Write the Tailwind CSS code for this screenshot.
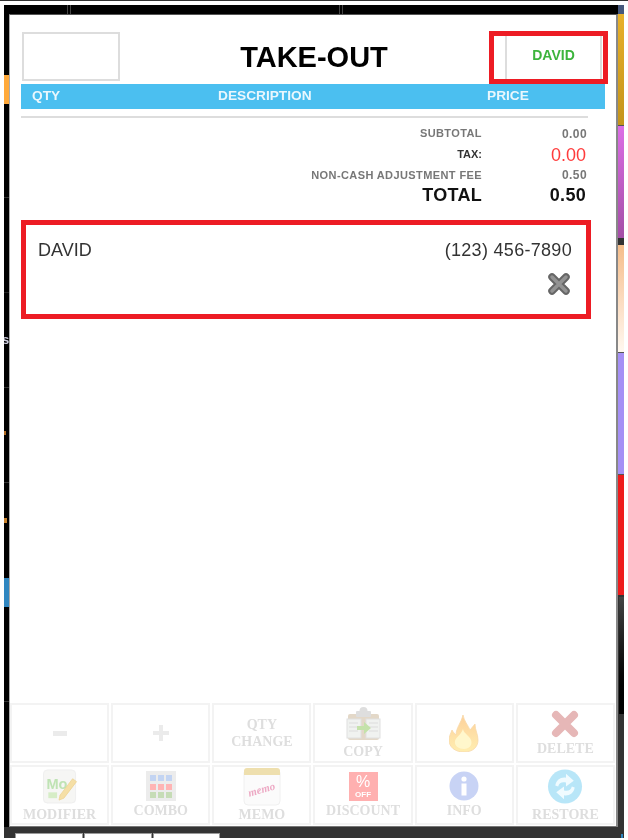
<!DOCTYPE html>
<html lang="en">
<head>
  <meta charset="UTF-8">
  <meta name="viewport" content="width=device-width, initial-scale=1.0">
  <title>Take-Out Order</title>
  <script src="https://cdn.jsdelivr.net/npm/@tailwindcss/browser@4"></script>
</head>
<body class="bg-white font-['Liberation_Sans',Arial,sans-serif]">
  <div class="w-[628px] h-[840px] overflow-hidden bg-white blur-[0.5px]">
    <div class="h-[5px] border-t border-[#333]"></div>
    <div class="ml-[4px] w-[620px] h-[833px] flex flex-col bg-[#333]">

      <!-- top edge of the screen behind -->
      <div class="h-[9px] flex bg-black">
        <div class="w-[64px] border-r border-[#444]"></div>
        <div class="w-[3px] border-r border-[#444]"></div>
        <div class="w-[269px] border-r border-[#444]"></div>
        <div class="w-[3px] border-r border-[#444]"></div>
        <div class="flex-1"></div>
        <div class="w-[6px] bg-[#46587c]"></div>
      </div>

      <div class="h-[813px] flex">
        <!-- left strip -->
        <div class="w-[5px] flex flex-col bg-black text-[13px] font-bold leading-none overflow-hidden">
          <div class="h-[61px]"></div>
          <div class="h-[29px] bg-[#ffa93a]"></div>
          <div class="h-[94px] border-b border-[#333]"></div>
          <div class="h-[95px] border-b border-[#222]"></div>
          <div class="h-[95px] border-b border-[#333] relative text-[#ccd]"><span class="block pt-[40px] -ml-[2px]">s</span></div>
          <div class="h-[95px] border-b border-[#333] pt-[43px]"><div class="w-[2px] h-[4px] bg-[#b06a20]"></div></div>
          <div class="h-[95px] pt-[35px]"><div class="w-[3px] h-[5px] bg-[#c9822c]"></div></div>
          <div class="h-[29px] bg-[#2f86c0]"></div>
          <div class="h-[95px] border-b border-[#333]"></div>
        </div>

        <!-- take-out panel -->
        <div class="w-[609px] flex flex-col bg-white border-t border-t-[#555] border-l border-l-[#aaa] border-r-2 border-r-[#888] border-b border-b-[#777]">
          <div class="pt-[16px] pl-[12px] flex items-start h-[69px]">
            <div class="mt-[1px] w-[98px] h-[49px] border-2 border-[#ddd] shrink-0"></div>
            <div class="flex-1 pl-[19px] pt-[8px] text-center text-[29px] leading-[36px] font-bold text-black">TAKE-OUT</div>
            <div class="w-[119px] h-[53px] border-[5px] border-[#ed1c24] shrink-0 mr-[8px] pl-[11px] pr-[1px]">
              <div class="h-full border-x-2 border-[#ddd] flex items-center justify-center text-[14px] font-bold text-[#3cb43c] pb-[4px]">DAVID</div>
            </div>
          </div>

          <div class="ml-[11px] w-[584px] h-[25px] bg-[#4bbff0] pl-[11px] grid grid-cols-[186px_269px_1fr] items-center text-[13.7px] font-bold text-[#eaf7fd]">
            <span>QTY</span>
            <span>DESCRIPTION</span>
            <span>PRICE</span>
          </div>
          <div class="ml-[11px] w-[567px] h-[2px] mt-[7px] bg-[#ddd]"></div>

          <div class="mt-[5px] ml-[11px] w-[566px] font-bold text-right leading-none">
            <div class="h-[21px] grid grid-cols-[1fr_105px] items-center text-[11px] tracking-[0.4px] text-[#777]">
              <span>SUBTOTAL</span><span class="text-[12px]">0.00</span>
            </div>
            <div class="h-[21px] grid grid-cols-[1fr_105px] items-center text-[11px] text-[#333]">
              <span>TAX:</span><span class="text-[18px] font-normal text-[#ff3b3b] pr-px">0.00</span>
            </div>
            <div class="h-[20px] grid grid-cols-[1fr_105px] items-center text-[11px] tracking-[0.4px] text-[#777]">
              <span>NON-CASH ADJUSTMENT FEE</span><span class="text-[12px]">0.50</span>
            </div>
            <div class="h-[19px] grid grid-cols-[1fr_105px] items-center text-[18px] tracking-[0.3px] text-[#111]">
              <span>TOTAL</span><span class="pr-px">0.50</span>
            </div>
          </div>

          <div class="mt-[16px] ml-[11px] w-[570px] h-[99px] border-[5px] border-[#ed1c24] pl-[12px] pr-[14px] pt-[15px]">
            <div class="flex justify-between text-[18px] leading-[21px] text-[#333]">
              <span>DAVID</span>
              <span class="tracking-[0.3px]">(123) 456-7890</span>
            </div>
            <div class="flex justify-end mt-[11px] pr-[1px]">
              <svg width="24" height="24" viewBox="0 0 24 24">
                <path d="M5 5L19 19M19 5L5 19" stroke="#666" stroke-width="7.5" stroke-linecap="round"/>
                <path d="M5 5L19 19M19 5L5 19" stroke="#939393" stroke-width="3.5" stroke-linecap="round"/>
              </svg>
            </div>
          </div>

          <!-- action buttons, disabled -->
          <div class="mt-auto mr-[1px] grid grid-cols-6 gap-[2px] grid-rows-[60px_60px] pb-[1px] font-['Liberation_Serif',serif] font-bold text-[#dedede] text-[14px] leading-[17px] text-center">
            <div class="border-2 border-[#f3f3f3] flex items-center justify-center">
              <svg width="14" height="5"><rect width="14" height="5" fill="#ebebeb"/></svg>
            </div>
            <div class="border-2 border-[#f3f3f3] flex items-center justify-center">
              <svg width="16" height="16"><path d="M6 0h4v6h6v4h-6v6H6v-6H0V6h6z" fill="#ebebeb"/></svg>
            </div>
            <div class="border-2 border-[#f3f3f3] flex items-center justify-center">QTY<br>CHANGE</div>
            <div class="border-2 border-[#f3f3f3] flex flex-col items-center justify-center">
              <svg width="35" height="35" viewBox="0 0 35 35">
                <rect x="2" y="8" width="31" height="26" rx="2" fill="#e3d8c8"/>
                <circle cx="17.5" cy="5" r="4" fill="#dedede"/>
                <rect x="10" y="5" width="15" height="6" rx="1" fill="#dedede"/>
                <rect x="1" y="13" width="14" height="19" fill="#f0f2f0" stroke="#e0e0e0"/>
                <rect x="20" y="13" width="14" height="19" fill="#f0f2f0" stroke="#e0e0e0"/>
                <path d="M3 17h9M3 21h9M3 25h9M23 17h9M23 21h9M23 25h9" stroke="#dcdcdc"/>
                <path d="M11 20h7v-4l7 6-7 6v-4h-7z" fill="#c4e2aa"/>
              </svg>
              <span class="mt-[2px]">COPY</span>
            </div>
            <div class="border-2 border-[#f3f3f3] flex items-center justify-center">
              <svg width="30" height="37" viewBox="0 0 30 37">
                <defs><linearGradient id="flame" x1="0" y1="0" x2="0" y2="1"><stop offset="0" stop-color="#fdd09a"/><stop offset="1" stop-color="#ffeeb0"/></linearGradient></defs>
                <path d="M14 0C15 6 19 10 21 15L26 9C26 15 29 19 29 25C29 32 24 37 15 37C6 37 0 32 0 25C0 21 2 18 3 15C4 17 6 19 7 20C7 13 12 8 14 0Z" fill="url(#flame)" stroke="#f8d8a8" stroke-width="0.8"/>
                <path d="M14 14C15 19 20 20 22 25C24 30 20 34 15 34C10 34 5 31 6 26C7 22 12 20 14 14Z" fill="#fff7cc"/>
              </svg>
            </div>
            <div class="border-2 border-[#f3f3f3] flex flex-col items-center justify-center">
              <svg width="30" height="30" viewBox="0 0 30 30">
                <path d="M6 6L24 24M24 6L6 24" stroke="#e6b7b7" stroke-width="8" stroke-linecap="round"/>
              </svg>
              <span class="mt-[1px]">DELETE</span>
            </div>

            <div class="border-2 border-[#f3f3f3] flex flex-col items-center justify-center pt-[2px]">
              <svg width="36" height="36" viewBox="0 0 36 36">
                <rect x="1" y="1" width="33" height="34" rx="4" fill="#f6f6f4" stroke="#eeeeee"/>
                <text x="4" y="21" font-family="Liberation Sans, sans-serif" font-size="15" font-weight="700" fill="#bfe3b4">Mo</text>
                <rect x="6" y="24" width="9" height="6" fill="#d6edc6"/>
                <path d="M18 27L31 10L35 13L22 30L17 32Z" fill="#f5dfa6" stroke="#ecd08c" stroke-width="0.7"/>
              </svg>
              <span class="mt-[2px]">MODIFIER</span>
            </div>
            <div class="border-2 border-[#f3f3f3] flex flex-col items-center justify-center">
              <svg width="30" height="30" viewBox="0 0 30 30">
                <rect width="30" height="30" fill="#ececec"/>
                <path d="M4 4h6v6H4zM12 4h6v6h-6zM20 4h6v6h-6z" fill="#c3d4f2"/>
                <path d="M4 13h6v6H4zM12 13h6v6h-6zM20 13h6v6h-6z" fill="#ffb4b4"/>
                <path d="M4 21h6v6H4zM12 21h6v6h-6zM20 21h6v6h-6z" fill="#c6dcb6"/>
              </svg>
              <span class="mt-[1px]">COMBO</span>
            </div>
            <div class="border-2 border-[#f3f3f3] flex flex-col items-center justify-center">
              <svg width="38" height="39" viewBox="0 0 38 39">
                <rect x="1" y="2" width="36" height="36" rx="4" fill="#fbfbfb" stroke="#f0f0f0"/>
                <path d="M1 8V4a3 3 0 0 1 3-3h30a3 3 0 0 1 3 3v4z" fill="#eedfae"/>
                <text x="19" y="26" transform="rotate(-16 19 24)" text-anchor="middle" font-family="Liberation Serif, serif" font-style="italic" font-size="11" font-weight="700" fill="#eda9c4">memo</text>
              </svg>
              <span>MEMO</span>
            </div>
            <div class="border-2 border-[#f3f3f3] flex flex-col items-center justify-center">
              <div class="w-[29px] h-[29px] bg-[#ffb0b0] flex flex-col items-center justify-center gap-[1px] font-['Liberation_Sans',sans-serif] text-white leading-none">
                <span class="text-[16px] font-normal">%</span>
                <span class="text-[8px]">OFF</span>
              </div>
              <span class="mt-[1px]">DISCOUNT</span>
            </div>
            <div class="border-2 border-[#f3f3f3] flex flex-col items-center justify-center">
              <svg width="30" height="30" viewBox="0 0 30 30">
                <circle cx="15" cy="15" r="14.5" fill="#c8d3f5"/>
                <circle cx="15" cy="8" r="2.6" fill="#fff"/>
                <rect x="12.5" y="12.5" width="5" height="12" fill="#fff"/>
              </svg>
              <span class="mt-[1px]">INFO</span>
            </div>
            <div class="border-2 border-[#f3f3f3] flex flex-col items-center justify-center pt-[2px]">
              <svg width="36" height="36" viewBox="0 0 36 36">
                <circle cx="18" cy="18" r="17.5" fill="#b8e6f8"/>
                <path d="M8 17C9 11 14 8 19 9V5l8 7-8 6v-4C15 13 12 14 11 18Z" fill="#f0fbff"/>
                <path d="M28 19C27 25 22 28 17 27V31l-8-7 8-6v4C21 23 24 22 25 18Z" fill="#f0fbff"/>
              </svg>
              <span class="mt-[2px]">RESTORE</span>
            </div>
          </div>
        </div>

        <!-- right strip -->
        <div class="w-[6px] flex flex-col">
          <div class="h-[112px] bg-gradient-to-b from-[#e8b02a] to-[#c4941c] border-b border-[#555]"></div>
          <div class="h-[112px] bg-gradient-to-b from-[#dc6ee6] to-[#a44ea6]"></div>
          <div class="h-[7px]"></div>
          <div class="h-[108px] bg-gradient-to-b from-[#f5bd8a] to-[#fff8f0] border-b border-[#555]"></div>
          <div class="h-[122px] bg-[#a590f5] border-b border-[#555]"></div>
          <div class="h-[120px] bg-[#ee1c1c]"></div>
          <div class="h-[2px]"></div>
          <div class="h-[117px] w-[5px] ml-[1px] bg-gradient-to-b from-[#444] to-black"></div>
        </div>
      </div>

      <!-- tabs of the screen behind -->
      <div class="h-[11px] flex items-end pl-[11px] gap-px">
        <div class="w-[68px] h-[5px] bg-white border-x border-t border-[#999]"></div>
        <div class="w-[68px] h-[5px] bg-white border-x border-t border-[#999]"></div>
        <div class="w-[67px] h-[5px] bg-white border-x border-t border-[#999]"></div>
        <div class="ml-auto mr-[1px] w-[2px] h-[4px] bg-[#2f86c0]"></div>
      </div>
    </div>
  </div>
</body>
</html>
